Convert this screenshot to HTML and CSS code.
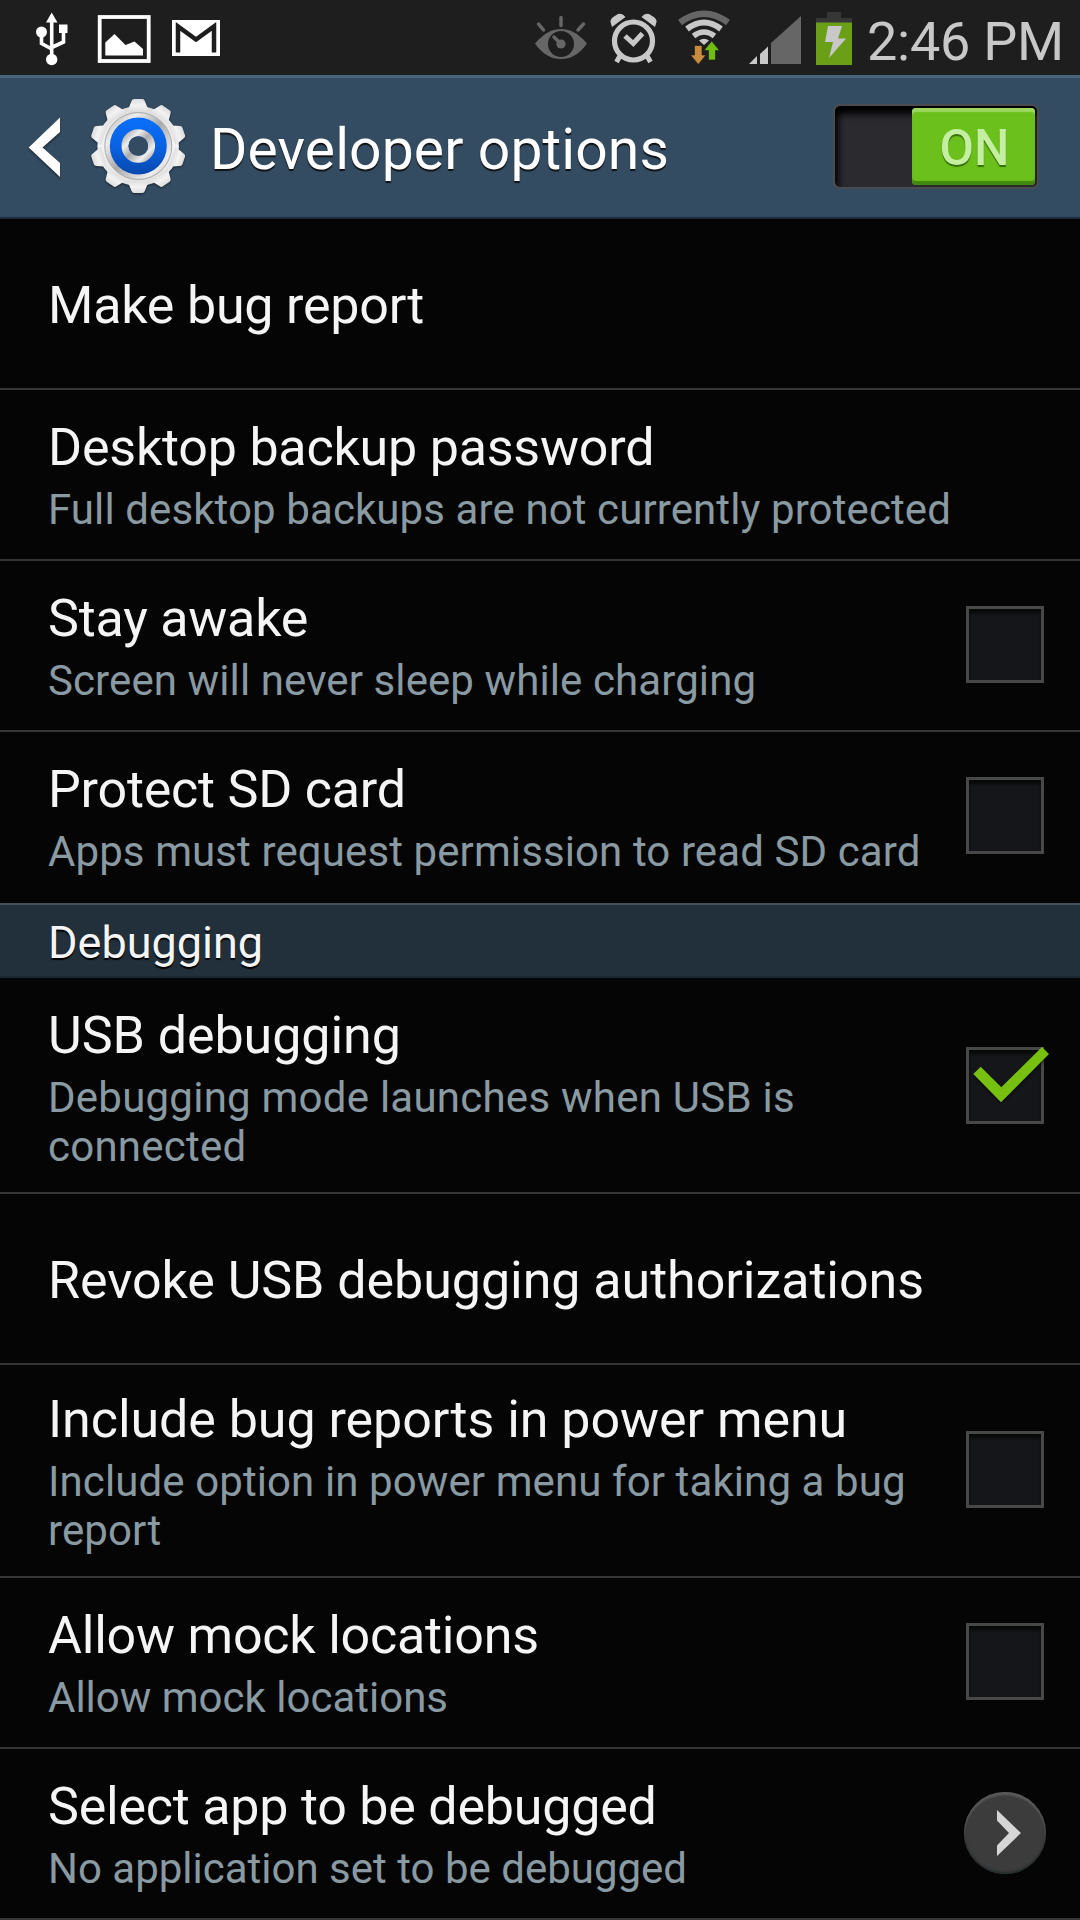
FILE: index.html
```html
<!DOCTYPE html>
<html lang="en">
<head>
<meta charset="utf-8">
<title>Developer options</title>
<link rel="stylesheet" href="styles.css">
</head>
<body>
<header class="status">
  <svg class="status-left" width="240" height="75" viewBox="0 0 240 75">
    <g fill="#fff">
      <path d="M51.700 12.500L57.500 22.500H46z"/>
      <circle cx="41.500" cy="32" r="5.500"/><rect x="59" y="24.500" width="8.500" height="8.500"/><circle cx="51.700" cy="59.500" r="5.700"/>
    </g>
    <path d="M51.700 20V56M41.500 34V43.500L51.700 49M63.500 31V42L51.700 47.500" fill="none" stroke="#fff" stroke-width="3.600"/>
    <rect x="99.700" y="17" width="49" height="44" fill="none" stroke="#fff" stroke-width="3.800"/>
    <path d="M105.300 55.500V42.500L114.500 34L125.500 45L134.500 41.500L143 49V55.500z" fill="#fff"/>
    <rect x="172" y="20" width="48" height="36" fill="#fff"/>
    <path d="M178 52.500V26.500L196 39.500L214 26.500V52.500" fill="none" stroke="#1e1e1e" stroke-width="4.500"/>
  </svg>
  <div class="status-right">
    <svg width="330" height="75" viewBox="530 0 330 75">
      <path d="M535 43.500C545 32 553 29 561 29S577 32 587 43.500C579 55 570 59 561 59S543 55 535 43.500z" fill="#666"/>
      <circle cx="561" cy="44" r="13" fill="#1e1e1e"/><circle cx="561" cy="44" r="4.600" fill="#666"/>
      <path d="M561 44L554 37M561 17.500V25.500M538.500 24L543.500 30M583.500 24L578 30" stroke="#666" stroke-width="3.500" stroke-linecap="round"/>
      <g fill="none" stroke="#c8c8c8">
        <circle cx="633.500" cy="41" r="19" stroke-width="5.200"/>
        <path d="M625 36L633.300 43.500L642.500 33.500" stroke-width="5"/>
        <path d="M620.500 55L616.500 62M646.500 55L650.500 62" stroke-width="5"/>
      </g>
      <path d="M612 27L610.500 22Q610 19 614 16.500L618 14Q622 12.500 625.500 17zM655 27L656.500 22Q657 19 653 16.500L649 14Q645 12.500 641.500 17z" fill="#c8c8c8"/>
      <g fill="none">
        <path d="M680 22.500Q704 5 728 22.500" stroke="#666" stroke-width="6.500"/>
        <path d="M687 29Q704 16 721 29" stroke="#c8c8c8" stroke-width="6"/>
        <path d="M693.500 36Q704 28 714.500 36" stroke="#c8c8c8" stroke-width="5.500"/>
      </g>
      <path d="M699 40.500Q704 37 709 40.500L704 45z" fill="#c8c8c8"/>
      <path d="M694.500 45.500H702V55H706L698.300 64.500L690.500 55H694.500z" fill="#c88c3c" stroke="#1e1e1e" stroke-width=".7"/>
      <path d="M711.700 41L719.500 50.500H715.500V60H708.500V50.500H704z" fill="#70bd10" stroke="#1e1e1e" stroke-width=".7"/>
      <path d="M749 64L757 56V64zM760 64V54L768 46.500V64z" fill="#c8c8c8"/>
      <path d="M771 64V43L801 16V64z" fill="#666"/>
      <path d="M827 12H841V18H852V23H816V18H827z" fill="#363636"/>
      <rect x="816" y="22.500" width="36" height="42.500" fill="#6b9f17"/>
      <path d="M828 26H842L838 38.500H846L829 58L833 42H825z" fill="#c8c8c8"/>
    </svg>
    <span class="clock">2:46 PM</span>
  </div>
</header>

<div class="bar">
  <svg class="back" width="34" height="62" viewBox="0 0 34 62"><path d="M32 .5V15L14.500 30.500L32 46V60L.7 30.500z" fill="#fff"/></svg>
  <svg class="gear" width="96" height="98" viewBox="0 0 96 98">
    <defs>
      <linearGradient id="body" x1="0" y1="0" x2="0" y2="1"><stop offset="0" stop-color="#dcdcdc"/><stop offset=".5" stop-color="#f3f3f3"/><stop offset="1" stop-color="#e0e0e0"/></linearGradient>
      <linearGradient id="ring" x1="0" y1="0" x2="1" y2="1"><stop offset="0" stop-color="#aaa"/><stop offset=".25" stop-color="#eee"/><stop offset=".5" stop-color="#aaa"/><stop offset=".8" stop-color="#eee"/><stop offset="1" stop-color="#aaa"/></linearGradient>
      <linearGradient id="blue" x1="0" y1="0" x2="0" y2="1"><stop offset="0" stop-color="#0a70fa"/><stop offset=".55" stop-color="#0860e0"/><stop offset="1" stop-color="#0848ac"/></linearGradient>
      <path id="tooth" d="M37.500 13L41.500 3Q42 1 44 1H52Q54 1 54.500 3L58.500 13z"/>
    </defs>
    <g class="gear-body" fill="url(#body)" transform="translate(-.8 0) scale(1.020 1)">
      <circle cx="48" cy="48" r="40"/>
      <use href="#tooth"/><use href="#tooth" transform="rotate(36 48 48)"/><use href="#tooth" transform="rotate(72 48 48)"/><use href="#tooth" transform="rotate(108 48 48)"/><use href="#tooth" transform="rotate(144 48 48)"/><use href="#tooth" transform="rotate(180 48 48)"/><use href="#tooth" transform="rotate(216 48 48)"/><use href="#tooth" transform="rotate(252 48 48)"/><use href="#tooth" transform="rotate(288 48 48)"/><use href="#tooth" transform="rotate(324 48 48)"/>
    </g>
    <circle cx="48.300" cy="48" r="33.500" fill="url(#ring)" stroke="#aaa"/>
    <circle cx="48.300" cy="48" r="28.500" fill="url(#blue)"/>
    <circle cx="48.300" cy="48" r="13.300" fill="none" stroke="url(#ring)" stroke-width="7"/>
    <circle cx="48.300" cy="48" r="9.800" fill="#344c62"/>
  </svg>
  <h1 class="bar-title">Developer options</h1>
  <div class="switch"><div class="knob">ON</div></div>
</div>

<main>
  <section class="row single"><div class="text"><h2>Make bug report</h2></div></section>
  <section class="row"><div class="text"><h2>Desktop backup password</h2><p>Full desktop backups are not currently protected</p></div></section>
  <section class="row"><div class="text"><h2>Stay awake</h2><p>Screen will never sleep while charging</p></div><div class="check"></div></section>
  <section class="row last"><div class="text"><h2>Protect SD card</h2><p>Apps must request permission to read SD card</p></div><div class="check"></div></section>
  <h3 class="group">Debugging</h3>
  <section class="row tall"><div class="text"><h2 class="even">USB debugging</h2><p class="loose">Debugging mode launches when USB is<br>connected</p></div><div class="check">
    <svg class="tick" width="82" height="62" viewBox="0 0 82 62"><path d="M3.300 30L10.700 22.700L31.300 43.300L72 3L79 10L31 58.300z" fill="#77c010"/></svg></div></section>
  <section class="row single"><div class="text"><h2 class="even">Revoke USB debugging authorizations</h2></div></section>
  <section class="row mid"><div class="text"><h2 class="even">Include bug reports in power menu</h2><p>Include option in power menu for taking a bug<br>report</p></div><div class="check"></div></section>
  <section class="row"><div class="text"><h2>Allow mock locations</h2><p class="even">Allow mock locations</p></div><div class="check"></div></section>
  <section class="row"><div class="text"><h2>Select app to be debugged</h2><p class="even">No application set to be debugged</p></div><div class="more">
    <svg width="26" height="48" viewBox="0 0 26 48"><path d="M1 1L25 24L1 47V36.500L13 24L1 11.500z" fill="#d6d6d6"/></svg></div></section>
</main>
</body>
</html>
```
FILE: styles.css
```css
* { box-sizing: border-box; }
body, h1, h2, h3, p { margin: 0; font-weight: 400; }
body { width: 1080px; height: 1920px; overflow: hidden; background: #050505; color: #f5f5f5; font-family: Roboto, sans-serif; }
svg { display: block; flex: none; }

.status { display: flex; justify-content: space-between; height: 75px; background: #1e1e1e; }
.status-right { display: flex; padding-right: 17px; }
.clock { width: 203px; padding-left: 7px; font-size: 54px; line-height: 83px; letter-spacing: -.25px; color: #c8c8c8; white-space: nowrap; }

.bar { display: flex; align-items: flex-start; height: 144px; background: #344c62; border-top: 3px solid #48657e; border-bottom: 2px solid #1d2d3d; }
.back { margin: 39px 0 0 28px; filter: drop-shadow(0 2px 1px #0006); }
.gear { margin: 20px 0 0 28px; overflow: visible; }
.gear-body { filter: drop-shadow(0 1px 1px #0008); }
.bar-title { flex: 1; margin-left: 24px; font-size: 57px; line-height: 144px; letter-spacing: .1px; text-shadow: 0 2px 1px #111; color: #fff; white-space: nowrap; }
.switch { width: 206px; height: 85px; margin: 26px 41px 0 0; padding: 2px 2px 3px; border: 2px solid #4a4c50; border-radius: 7px; background: #2a2a2f; box-shadow: inset 3px 8px 7px #000; display: flex; justify-content: flex-end; }
.knob { width: 123px; height: 77px; padding-left: 2px; border-radius: 4px; background: #6cc01c; box-shadow: inset 0 4px 1px #9cd760, inset 0 -4px 1px #41880c; color: #c4eea0; font-size: 50px; font-weight: 500; line-height: 81px; text-align: center; text-shadow: 0 2px 1px #356e08; }

.row { display: flex; justify-content: space-between; align-items: center; height: 171px; padding: 0 36px 0 48px; border-bottom: 2px solid #363636; }
.row.tall { height: 216px; }
.row.mid { height: 213px; }
.row.last { border-color: #050505; }
.text { padding-top: 2px; white-space: nowrap; }
.text h2 { font-size: 52px; line-height: 61px; letter-spacing: -.22px; }
.text p { margin-top: 7px; font-size: 42px; line-height: 49px; letter-spacing: .1px; color: #8a9aa2; }
.text h2.even { letter-spacing: -.06px; }
.text p.even { letter-spacing: 0; }
.text p.loose { letter-spacing: .24px; }
.single .text { padding-top: 4px; }
.tall .text { padding-top: 5px; }
.mid .text { padding-top: 3px; }
.group { height: 75px; padding-left: 48px; border-top: 2px solid #42525f; border-bottom: 2px solid #1a2630; background: #22303c; font-size: 45px; line-height: 76px; text-shadow: 0 2px 1px #000; }

.check { position: relative; width: 78px; height: 77px; margin-bottom: 2px; border: 3px solid #484848; background: #15161a; box-shadow: inset 0 4px 3px #080a08; }
.tall .check { margin-bottom: 0; }
.tick { position: absolute; left: 1px; top: -6px; filter: drop-shadow(0 2px 1px #0008); }
.more { display: flex; align-items: center; justify-content: center; width: 82px; height: 82px; margin: 0 -2px 1px 0; padding-left: 8px; border-radius: 50%; background: #3c3c3c; box-shadow: inset 0 3px 2px #5a5a5a, inset 0 -2px 2px #272c2e; }
```
